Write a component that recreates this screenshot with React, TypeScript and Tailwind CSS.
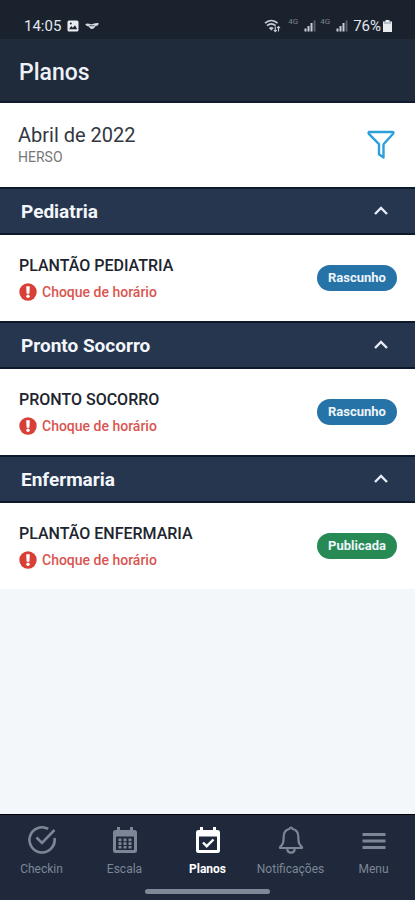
import React, { useState } from 'react';

type Plan = {
  title: string;
  warning: string;
  status: 'Rascunho' | 'Publicada';
};

type Sector = {
  name: string;
  plans: Plan[];
};

const sectors: Sector[] = [
  {
    name: 'Pediatria',
    plans: [{ title: 'PLANTÃO PEDIATRIA', warning: 'Choque de horário', status: 'Rascunho' }],
  },
  {
    name: 'Pronto Socorro',
    plans: [{ title: 'PRONTO SOCORRO', warning: 'Choque de horário', status: 'Rascunho' }],
  },
  {
    name: 'Enfermaria',
    plans: [{ title: 'PLANTÃO ENFERMARIA', warning: 'Choque de horário', status: 'Publicada' }],
  },
];

const SignalIcon = () => (
  <svg width="12" height="12" viewBox="0 0 12 12" fill="#c9ced6" aria-hidden="true">
    <rect x="0.5" y="8.5" width="2" height="3" />
    <rect x="3.5" y="6" width="2" height="5.5" />
    <rect x="6.5" y="3" width="2" height="8.5" />
    <rect x="9.5" y="0.5" width="2" height="11" fill="#56606e" />
  </svg>
);

const StatusBar = () => (
  <div className="flex h-[39px] items-center justify-between bg-[#1a222e] pt-3 pl-6 pr-[23px] text-[#e3e7ed]">
    <div className="flex items-center gap-[6px]">
      <span className="text-[15px] leading-6">14:05</span>
      <svg width="12" height="12" viewBox="0 0 12 12" aria-hidden="true">
        <rect x="0.5" y="0.5" width="11" height="11" rx="1.5" fill="#e8ebf0" />
        <path d="M2 9.3 4.2 6l1.7 1.8L8 5.3l2.2 4z" fill="#1a222e" />
        <circle cx="3.8" cy="3.6" r="1" fill="#1a222e" />
      </svg>
      <svg width="14" height="8" viewBox="0 0 14 8" fill="#d5dae1" aria-hidden="true">
        <path d="M0.3 2.2C2 1 4 1.4 5.5 2.2 8 2.6 10 .7 13.6 1.2c.2 1.6-1 2.6-3 2.8C9.5 6 8 7.2 6.8 7 5.4 6.8 4.5 5.5 3.8 4.4 2.3 4.3 1 3.6.3 2.2z" />
        <path d="M4.5 3.7h5" stroke="#1a222e" strokeWidth="0.7" />
      </svg>
    </div>
    <div className="flex items-center">
      <svg width="17" height="14" viewBox="0 0 17 14" fill="none" stroke="#c9ced6" aria-hidden="true">
        <path d="M1 4.2C4.8.8 9.8.8 13.6 4.2" strokeWidth="1.7" />
        <path d="M3 6.7c2.6-2.2 6-2.2 8.6 0" strokeWidth="1.6" />
        <path d="M5.2 9c1.3-1 2.9-1 4.2 0l-2.1 2.3z" fill="#c9ced6" strokeWidth="0.6" />
        <path d="M11.3 7.5v5M9.8 11l1.5 1.7 1.5-1.7M14.5 12.5v-5M13 9.2l1.5-1.7L16 9.2" strokeWidth="1.1" />
      </svg>
      <span className="mb-2 ml-[7px] w-4 text-[8px] leading-none text-[#7c8490]">4G</span>
      <SignalIcon />
      <span className="mb-2 ml-1 w-4 text-[8px] leading-none text-[#7c8490]">4G</span>
      <SignalIcon />
      <span className="ml-[5px] text-[15px] leading-6">76%</span>
      <svg className="ml-[2px]" width="9" height="12" viewBox="0 0 9 12" aria-hidden="true">
        <path d="M2.5 0h4v1.500H9V12H0V1.500h2.500z" fill="#e8ebf0" />
        <path d="M1 2.500h7v1H1z" fill="#8b939f" />
      </svg>
    </div>
  </div>
);

const FilterIcon = () => (
  <svg width="28" height="30" viewBox="0 0 28 30" fill="none" stroke="#2d9fdb" strokeWidth="2.4" strokeLinejoin="round" aria-hidden="true">
    <path d="M2.500 2h23c1 0 1.200 1 .6 1.800L16.500 14.200V27.500l-4.500-3.200V14.200L1.900 3.800C1.300 3 1.500 2 2.500 2z" />
  </svg>
);

const WarningIcon = () => (
  <svg width="18" height="18" viewBox="0 0 18 18" aria-hidden="true">
    <circle cx="9" cy="9" r="8.7" fill="#d84037" />
    <path d="M7.200 3.200h3.600l-.4 7.500H7.600z" fill="#fff" />
    <circle cx="9" cy="13.3" r="1.7" fill="#fff" />
  </svg>
);

const PlanRow = ({ plan }: { plan: Plan }) => (
  <li className="flex h-[86px] items-center justify-between bg-white pl-[19px] pr-[18px]">
    <div className="pt-[1px]">
      <h3 className="text-base leading-5 font-medium text-[#20242e]">{plan.title}</h3>
      <p className="mt-[7px] flex items-center gap-[5px] text-sm leading-[18px] font-medium text-[#d95550]">
        <WarningIcon />
        {plan.warning}
      </p>
    </div>
    <span
      className={`flex h-[26px] w-20 items-center justify-center rounded-full text-[13px] font-bold text-[#eef5f9] ${
        plan.status === 'Publicada' ? 'bg-[#278a55]' : 'bg-[#2573a7]'
      }`}
    >
      {plan.status}
    </span>
  </li>
);

const SectorGroup = ({ sector }: { sector: Sector }) => {
  const [open, setOpen] = useState(true);

  return (
    <section>
      <h2>
        <button
          type="button"
          aria-expanded={open}
          onClick={() => setOpen(!open)}
          className="flex h-12 w-full items-center justify-between border-y-2 border-[#0c1a2c] bg-[#26364f] pl-[21px] pr-[27px] text-[19px] leading-6 font-bold text-[#f3f6fa]"
        >
          <span className="pt-[2px]">{sector.name}</span>
          <svg
            className={open ? '' : 'rotate-180'}
            width="14"
            height="11"
            viewBox="0 0 14 11"
            fill="none"
            stroke="#e6ecf5"
            strokeWidth="2.4"
            aria-hidden="true"
          >
            <path d="M1 8l6-6 6 6" />
          </svg>
        </button>
      </h2>
      {open && (
        <ul>
          {sector.plans.map(plan => (
            <PlanRow key={plan.title} plan={plan} />
          ))}
        </ul>
      )}
    </section>
  );
};

const CheckinIcon = () => (
  <svg width="30" height="30" viewBox="0 0 30 30" fill="none" stroke="currentColor" strokeWidth="2.6" aria-hidden="true">
    <path d="M21.2 3.9A12.6 12.6 0 1 0 27.5 13" />
    <path d="M9.5 12.5l5.5 5.5L27.5 5" />
  </svg>
);

const ScheduleIcon = () => (
  <svg width="30" height="30" viewBox="0 0 30 30" aria-hidden="true">
    <path
      fillRule="evenodd"
      fill="currentColor"
      d="M7 2h3v3h10V2h3v3h1.500A2.500 2.500 0 0 1 27 7.500v18a2.500 2.500 0 0 1-2.500 2.500h-19A2.500 2.500 0 0 1 3 25.500v-18A2.500 2.500 0 0 1 5.500 5H7zM6 11.500V25h18V11.500z"
    />
    <path
      fill="currentColor"
      d="M8.500 13.500h3v2.700h-3zm5 0h3v2.700h-3zm5 0h3v2.700h-3zm-10 3.700h3v2.700h-3zm5 0h3v2.700h-3zm5 0h3v2.700h-3zm-10 3.700h3v2.600h-3zm5 0h3v2.600h-3zm5 0h3v2.600h-3z"
    />
  </svg>
);

const PlansIcon = () => (
  <svg width="30" height="30" viewBox="0 0 30 30" aria-hidden="true">
    <path
      fillRule="evenodd"
      fill="currentColor"
      d="M7 2h3v3h10V2h3v3h1.500A2.500 2.500 0 0 1 27 7.500v18a2.500 2.500 0 0 1-2.500 2.500h-19A2.500 2.500 0 0 1 3 25.500v-18A2.500 2.500 0 0 1 5.500 5H7zM6 11.500V25h18V11.500z"
    />
    <path d="M10 17.500l3.700 3.700 6.800-6.700" fill="none" stroke="currentColor" strokeWidth="2.4" />
  </svg>
);

const BellIcon = () => (
  <svg width="30" height="30" viewBox="0 0 30 30" fill="none" stroke="currentColor" strokeWidth="2.2" strokeLinejoin="round" aria-hidden="true">
    <path d="M15 2.500c1 0 1.300.6 1.600 1.500 3.700.8 5.700 3.500 5.700 7.500 0 6.500 1 8.300 3.700 10.500v1H4v-1c2.700-2.200 3.700-4 3.700-10.500 0-4 2-6.700 5.700-7.500.3-.9.6-1.500 1.600-1.500z" />
    <path d="M11.300 23.500c0 5.500 7.400 5.500 7.400 0" />
  </svg>
);

const MenuIcon = () => (
  <svg width="30" height="30" viewBox="0 0 30 30" stroke="currentColor" strokeWidth="2.8" aria-hidden="true">
    <path d="M3.5 9.500h23M3.500 16h23M3.500 22.500h23" />
  </svg>
);

const tabs = [
  { label: 'Checkin', icon: <CheckinIcon /> },
  { label: 'Escala', icon: <ScheduleIcon /> },
  { label: 'Planos', icon: <PlansIcon /> },
  { label: 'Notificações', icon: <BellIcon /> },
  { label: 'Menu', icon: <MenuIcon /> },
];

const BottomNav = () => {
  const [active, setActive] = useState('Planos');

  return (
    <footer className="border-t border-black bg-[#1f293b] pb-[6px]">
      <nav className="grid grid-cols-5">
        {tabs.map(tab => (
          <button
            key={tab.label}
            type="button"
            onClick={() => setActive(tab.label)}
            className={`flex flex-col items-center gap-[6px] pt-[10px] pb-3 text-xs leading-4 ${
              tab.label === active ? 'font-bold text-white' : 'text-[#7d8696]'
            }`}
          >
            {tab.icon}
            {tab.label}
          </button>
        ))}
      </nav>
      <div className="mx-auto h-[5px] w-[30%] rounded-full bg-[#7f8897]" />
    </footer>
  );
};

const App = () => {
  return (
    <div className="flex min-h-screen flex-col bg-[#f3f7fa] font-['Roboto','Liberation_Sans',sans-serif]">
      <StatusBar />
      <header className="flex h-16 items-center border-b-2 border-[#101a2c] bg-[#1f2a3b] pt-[6px] pl-[19px]">
        <h1 className="text-[23px] leading-8 font-medium text-[#eef1f6]">Planos</h1>
      </header>
      <main className="flex-1">
        <div className="flex h-[84px] items-center justify-between bg-white pl-[18px] pr-5">
          <div>
            <p className="text-xl leading-6 text-[#33373f]">Abril de 2022</p>
            <p className="text-sm leading-5 text-[#777]">HERSO</p>
          </div>
          <button type="button" aria-label="Filtrar">
            <FilterIcon />
          </button>
        </div>
        {sectors.map(sector => (
          <SectorGroup key={sector.name} sector={sector} />
        ))}
      </main>
      <BottomNav />
    </div>
  );
};

export default App;
